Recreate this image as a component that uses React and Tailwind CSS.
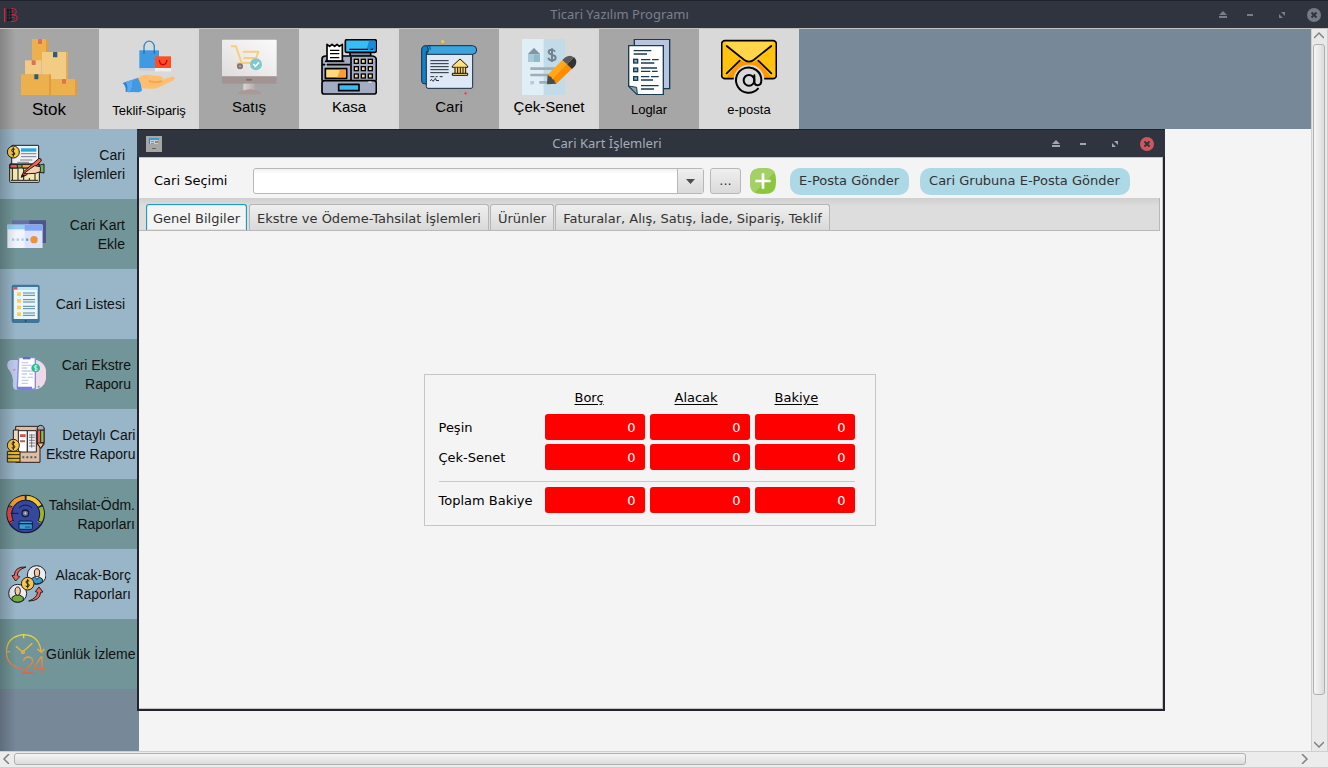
import React from "react";

function StockIcon() {
  return (
    <svg viewBox="63 117 168 168" className="size-14" aria-hidden="true">
      <rect x="96" y="117" width="42" height="66" fill="#ecb04d" />
      <rect x="138" y="117" width="7" height="42" fill="#e49a3e" />
      <rect x="114" y="117" width="12" height="15" rx="2" fill="#e07058" />
      <rect x="126" y="156" width="73" height="81" fill="#f2cb85" />
      <rect x="199" y="156" width="5" height="81" fill="#e5a850" />
      <rect x="159" y="156" width="13" height="16" rx="2" fill="#2f5a70" />
      <rect x="75" y="181" width="50" height="42" fill="#f2cb85" />
      <rect x="95" y="181" width="12" height="14" rx="2" fill="#e07058" />
      <rect x="63" y="223" width="84" height="62" fill="#ecb04d" />
      <rect x="147" y="223" width="6" height="62" fill="#e49a3e" />
      <rect x="103" y="223" width="12" height="15" rx="2" fill="#2f5a70" />
      <rect x="153" y="237" width="72" height="48" fill="#ecb04d" />
      <rect x="225" y="237" width="6" height="48" fill="#e49a3e" />
      <rect x="186" y="237" width="12" height="14" rx="2" fill="#e07058" />
    </svg>
  );
}

function OfferIcon() {
  return (
    <svg viewBox="363 117 168 168" className="size-14" aria-hidden="true">
      <path d="M432 160v-19a15 17 0 0 1 31 0v19" fill="none" stroke="#2f86d3" strokeWidth="4" />
      <rect x="418" y="151" width="59" height="54" fill="#3f9ae3" />
      <path d="M432 151v10M463 151v10" stroke="#1e70bd" strokeWidth="4" />
      <path d="M418 205h48v8h-48z" fill="#cdd0d4" />
      <rect x="465" y="169" width="48" height="36" fill="#fb4f24" />
      <rect x="465" y="204" width="48" height="10" fill="#f0f0f0" />
      <path d="M478 180q1 14 11 14t12-14" fill="none" stroke="#c9001f" strokeWidth="4" />
      <path d="M413 235q11-12 29-11l22 3q24-1 25 8 0 4-6 6 22-9 32-11 10-2 10 4 0 6-16 13l-32 15q-9 5-22 4l-30-1z" fill="#ffbe6f" />
      <path d="M447 243q20 7 39 0" fill="none" stroke="#f5a040" strokeWidth="4" />
      <path d="M397 239l17-6q11 19 12 39l-9 5-28-1q8-18 8-37z" fill="#3f9ae3" />
      <path d="M368 249l29-10q2 22-8 38l-12-2q2-16-9-26z" fill="#2f80cf" />
      <path d="M377 246l20-7q2 22-8 38l-8-1q4-19-4-30z" fill="#57aaf0" />
    </svg>
  );
}

function SaleIcon() {
  return (
    <svg viewBox="663 117 168 168" className="size-14" aria-hidden="true">
      <defs>
        <linearGradient id="screen" x1="0" y1="1" x2="1" y2="0">
          <stop offset="0" stopColor="#e0dcdd" />
          <stop offset="1" stopColor="#fbfafa" />
        </linearGradient>
        <linearGradient id="stand" x1="0" y1="0" x2="1" y2="0">
          <stop offset="0" stopColor="#d9d5d6" />
          <stop offset="1" stopColor="#b8abad" />
        </linearGradient>
      </defs>
      <path d="M669 119h158a3 3 0 0 1 3 3v108H666V122a3 3 0 0 1 3-3z" fill="url(#screen)" />
      <path d="M666 229h164v18a4 4 0 0 1-4 4H670a4 4 0 0 1-4-4z" fill="#a39494" />
      <rect x="738" y="236" width="18" height="6" rx="3" fill="#806f70" />
      <rect x="730" y="251" width="34" height="21" fill="url(#stand)" />
      <path d="M712 283q3-10 24-13 15-5 28 0 18 3 21 13z" fill="#ad9797" />
      <path d="M695 139h13l17 50h44M731 155h44l-6 19h-36M716 189q-4 0-4 5" fill="none" stroke="#f5cf7b" strokeWidth="6" strokeLinecap="round" strokeLinejoin="round" />
      <circle cx="720" cy="199" r="9" fill="#7d7072" />
      <circle cx="720" cy="199" r="4" fill="#a99fa0" />
      <circle cx="768" cy="193" r="18" fill="#7fc9ce" />
      <path d="M760 192l6 7 11-12" fill="none" stroke="#fff" strokeWidth="5" />
    </svg>
  );
}

const registerKeys = [1069, 1090, 1111].flatMap((x) => [184, 206, 228].map((y) => [x, y]));

function CashIcon() {
  return (
    <svg viewBox="963 117 168 168" className="size-14" aria-hidden="true">
      <g stroke="#000" strokeWidth="5" strokeLinejoin="round">
        <path d="M1050 155h62v15h-62z" fill="#798298" />
        <rect x="1036" y="119" width="93" height="38" rx="5" fill="#36bdf8" />
        <path d="M966 242v-64q0-10 11-10h139q12 0 13 12v62" fill="#a3acc2" />
        <rect x="966" y="242" width="163" height="40" rx="7" fill="#a3acc2" />
        <path d="M981 183v-50l8 6 7-6 8 6 7-6 7 6 9-6v50z" fill="#fff" />
        <path d="M1053 170v72M966 194h84" fill="none" />
        <rect x="976" y="206" width="64" height="29" fill="#ffd97d" />
        <rect x="1016" y="253" width="61" height="19" fill="#36bdf8" />
        <path d="M975 184h58" fill="none" />
      </g>
      <path d="M1107 122h17q3 0 3 4v25h-28z" fill="#168bdb" />
      <path d="M1048 148h56M1112 148h7M990 151h28M990 161h28M990 173h28" stroke="#000" strokeWidth="4" />
      <path d="M1020 209h17v23h-25z" fill="#ff9b31" />
      {registerKeys.map(([x, y]) => (
        <rect key={x + "-" + y} x={x - 6} y={y - 6} width="12" height="12" fill="#f3d9a0" stroke="#000" strokeWidth="4" />
      ))}
      <path d="M1105 246h10M978 188v12" stroke="#fff" strokeWidth="3" />
    </svg>
  );
}

function AccountIcon() {
  return (
    <svg viewBox="63 117 168 168" className="size-14" aria-hidden="true">
      <path d="M65 150q0-13 12-13h16v115H77q-12 0-12-8z" fill="#1580c4" stroke="#142c44" strokeWidth="3" />
      <path d="M79 155h139v105q0 5-5 5H84q-5 0-5-5z" fill="#dfe8f6" stroke="#142c44" strokeWidth="3" />
      <path d="M79 137h139q12 1 12 13t-12 13H79q12-13 0-26z" fill="#3ba4dc" stroke="#142c44" strokeWidth="3" />
      <path d="M91 149q0-12-12-12" fill="none" stroke="#0c5e9c" strokeWidth="4" />
      <path d="M91 182h55M91 191h55M91 200h55M91 209h55M91 218h55" stroke="#222b38" strokeWidth="3" />
      <path d="M91 230h12M107 230h6M119 230h9M91 243q4-9 6-2t6-2 5 2l9 1" fill="none" stroke="#222b38" strokeWidth="3" />
      <path d="M157 198l23-21 23 21v4h-46z" fill="#ffe178" stroke="#111" strokeWidth="3" />
      <path d="M163 203h34v17h-34z" fill="#ffd36f" />
      <path d="M165 202v19M173 202v19M181 202v19M189 202v19M197 202v19" stroke="#111" strokeWidth="3" />
      <path d="M157 220h46v6h-46z" fill="#ffe178" stroke="#111" strokeWidth="3" />
      <circle cx="128" cy="125" r="5" fill="#f5c544" />
      <circle cx="146" cy="119" r="2" fill="#80bd54" />
      <circle cx="181" cy="274" r="2" fill="#46aee1" />
      <path d="M192 280h10M197 275v10" stroke="#e74762" strokeWidth="3" />
    </svg>
  );
}

function ChequeIcon() {
  return (
    <svg viewBox="363 117 168 168" className="size-14" aria-hidden="true">
      <rect x="366" y="117" width="66" height="168" fill="#e0eff5" />
      <rect x="431" y="117" width="64" height="168" fill="#c1dce8" />
      <path d="M384 162l18-18 18 18v24h-36z" fill="#a9c9d8" />
      <path d="M384 162l18-18 18 18z" fill="#8793a0" />
      <path d="M402 164h18v22h-18z" fill="#8ebacb" />
      <path d="M465 155q-3-6-10-6-9 0-9 7 0 5 10 8 11 3 11 9 0 8-11 8-9 0-11-8M456 145v41" fill="none" stroke="#73828f" strokeWidth="6" />
      <path d="M391 206h74M391 225h52M418 247h30" stroke="#9faebd" strokeWidth="8" />
      <rect x="391" y="243" width="11" height="10" fill="#b5cbd8" />
      <path d="M443 224l45-45 14 14-46 46z" fill="#ffa719" />
      <path d="M455 239l46-47 15 14-48 46z" fill="#fd8c00" />
      <path d="M443 223q3 8 11 8 1 8 9 9 0 8 6 11l-28 2z" fill="#4d4b49" />
      <path d="M487 180l9-8q14-10 25 0l-20 21z" fill="#59595b" />
      <path d="M501 193l21-22q12 13 3 27l-9 9z" fill="#333336" />
    </svg>
  );
}

function LogsIcon() {
  return (
    <svg viewBox="663 117 168 168" className="size-14" aria-hidden="true">
      <path d="M703 118h106v148h-20V137h-86z" fill="#b8c5de" stroke="#183c52" strokeWidth="4" />
      <path d="M686 137h104v147h-78l-26-25z" fill="#fff" stroke="#183c52" strokeWidth="4" />
      <path d="M686 258l26 26-2-22z" fill="#8ba2b3" stroke="#183c52" strokeWidth="3" />
      <path d="M701 152h53M701 162h40M723 179h28M756 179h20M723 189h40M723 204h48M723 214h28M756 214h17M723 230h25M753 230h23M723 240h36M723 257h53M723 267h39" stroke="#183c52" strokeWidth="4" />
      <g fill="#8fa9bc" stroke="#183c52" strokeWidth="4">
        <rect x="701" y="178" width="12" height="11" />
        <rect x="701" y="204" width="12" height="11" />
        <rect x="701" y="230" width="12" height="11" />
      </g>
    </svg>
  );
}

function MailIcon() {
  return (
    <svg viewBox="963 117 168 168" className="size-14" aria-hidden="true">
      <rect x="965" y="122" width="164" height="114" rx="10" fill="#ffc20e" />
      <path d="M971 124h152l-62 54q-14 12-28 0z" fill="#ffd54a" />
      <path d="M979 233l41-52q27 15 54 0l41 52z" fill="#ff9800" />
      <rect x="965" y="122" width="164" height="114" rx="10" fill="none" stroke="#000" strokeWidth="5" />
      <path d="M980 138l53 42q14 10 28 0l53-42M980 220l39-38M1114 220l-39-38" fill="none" stroke="#000" strokeWidth="5" strokeLinecap="round" />
      <circle cx="1047" cy="240" r="46" fill="#d9d9d9" />
      <path d="M1074 266a38 38 0 1 1 10-25q0 15-11 15-10 0-10-13v-17" fill="none" stroke="#000" strokeWidth="6" strokeLinecap="round" />
      <circle cx="1047" cy="241" r="16" fill="none" stroke="#000" strokeWidth="6" />
    </svg>
  );
}

function LedgerIcon() {
  return (
    <svg viewBox="18 48 120 120" className="size-10 shrink-0" aria-hidden="true">
      <g stroke="#1c1c1e" strokeWidth="3" strokeLinejoin="round">
        <rect x="35" y="52" width="81" height="70" rx="2" fill="#edf0f5" />
        <rect x="29" y="108" width="89" height="55" rx="3" fill="#f4e9b3" />
        <path d="M37 120v36M54 120v36M71 120v36M88 150v6M105 135v21M33 157h81" fill="none" />
        <path d="M30 109h88v11H30z" fill="#67a558" />
        <path d="M30 109h22v11H30z" fill="#ed5b51" />
        <path d="M66 109h34v11H66z" fill="#f6a63d" />
        <circle cx="40" cy="72" r="18" fill="#f8c944" />
        <path d="M117 112l15-4v27l-13-2z" fill="#69b957" />
        <path d="M64 148l7-17 46-40q8 0 7 8l-45 42z" fill="#ee6652" />
        <path d="M71 137l20-15 13-9 17 3v15l-15 5-20 1z" fill="#f5d0b0" />
      </g>
      <path d="M63 148l3-11 9 7z" fill="#151515" />
      <path d="M63 66h46" stroke="#29a7d6" strokeWidth="10" />
      <path d="M63 77h46M63 86h46M60 96h37M52 103h35" stroke="#454850" strokeWidth="2" />
      <path d="M44 64q-9-4-9 3 0 4 5 5 6 2 4 7-3 4-9 0M40 58v28" fill="none" stroke="#1c1c1e" strokeWidth="3" />
    </svg>
  );
}

function CardsIcon() {
  return (
    <svg viewBox="18 258 120 120" className="size-10 shrink-0" aria-hidden="true">
      <rect x="36" y="277" width="104" height="68" fill="#6870a3" />
      <rect x="88" y="277" width="52" height="68" fill="#4b568b" />
      <rect x="22" y="290" width="105" height="70" fill="#f1f3ff" />
      <rect x="74" y="290" width="53" height="70" fill="#dce3fb" />
      <rect x="22" y="290" width="53" height="14" fill="#92cdf4" />
      <rect x="74" y="290" width="53" height="18" fill="#7fa5fa" />
      <path d="M36 335h39" stroke="#9bceef" strokeWidth="7" strokeDasharray="7 7" />
      <path d="M78 335h7" stroke="#6892ec" strokeWidth="7" />
      <circle cx="102" cy="335" r="11" fill="#eb923a" />
    </svg>
  );
}

function ListIcon() {
  return (
    <svg viewBox="18 468 120 120" className="size-10 shrink-0" aria-hidden="true">
      <rect x="35" y="470" width="84" height="115" rx="6" fill="#40769a" />
      <rect x="41" y="477" width="72" height="96" fill="#e9f7fc" />
      <path d="M41 477h12v8H41z" fill="#ed4e59" />
      <path d="M53 477h60v9H53z" fill="#bce5f5" />
      {[498, 518, 538, 558].map((y) => (
        <g key={y}>
          <rect x="51" y={y - 5} width="12" height="11" fill="#ffce57" />
          <path d={`M69 ${y - 3}h36M69 ${y + 4}h36`} stroke="#59849c" strokeWidth="3" />
        </g>
      ))}
      <circle cx="77" cy="579" r="3" fill="#234e6a" />
    </svg>
  );
}

function StatementIcon() {
  return (
    <svg viewBox="18 48 120 120" className="size-10 shrink-0" aria-hidden="true">
      <path d="M24 91q-7-28 19-25 25 2 37 10 14-16 32-9 25 8 27 37 2 30-15 44-19 13-35-2-14-8-31 5-20 12-19-22 1-19-15-38z" fill="#f0d7e9" />
      <path d="M24 91q-7-28 19-25l37 10v72q-20 4-34 7-10-4-7-26 1-19-15-38z" fill="#bccbef" />
      <path d="M56 59h50v91q-4 5-10 5H57q-6 0-5-9z" fill="#fff" stroke="#8787ee" strokeWidth="4" />
      <path d="M69 57h22v7H69z" fill="#6767dc" />
      <path d="M51 146h45q0 9 8 9H56q-6 0-5-9z" fill="#7a80dd" />
      <path d="M65 74h20M65 82h30M65 90h17M65 99h34M65 108h16M88 108h11M65 118h12M83 118h16M65 127h20M65 136h18" stroke="#c8cce9" strokeWidth="4" />
      <circle cx="107" cy="90" r="13" fill="#29bd96" />
      <path d="M112 84q-9-3-9 2t5 4 3 7q-5 2-8-1M107 81v18" fill="none" stroke="#fff" strokeWidth="2" />
      <circle cx="118" cy="65" r="3" fill="#31c793" />
      <circle cx="116" cy="146" r="3" fill="#31c793" />
      <circle cx="43" cy="95" r="3" fill="#ed7987" />
    </svg>
  );
}

function DetailIcon() {
  return (
    <svg viewBox="18 258 120 120" className="size-10 shrink-0" aria-hidden="true">
      <g stroke="#252020" strokeWidth="3" strokeLinejoin="round">
        <rect x="47" y="265" width="73" height="108" fill="#dfbca2" />
        <path d="M40 276h17v94H40z" fill="#f2d6bc" />
        <path d="M55 278h27v64H55z" fill="#fff" />
        <path d="M82 278h27v64H82z" fill="#edf0f4" />
        <path d="M112 270q10-14 20 0v49l-9 12-11-12z" fill="#ef6250" />
        <path d="M122 276h10v38h-10z" fill="#8ebc55" />
        <path d="M112 268q10-12 20 0v8h-20z" fill="#a8a9b5" />
        <path d="M112 315h20l-10 16z" fill="#f4c293" />
        <path d="M22 340h38v32H22z" fill="#e9b827" />
        <path d="M22 350h38M22 361h38" fill="none" />
        <circle cx="40" cy="322" r="18" fill="#f8c944" />
      </g>
      <path d="M60 289h17v8H60zM60 307h15v6H60z" fill="#cc5548" />
      <path d="M87 291h18M87 298h18M87 307h18M87 315h18M87 324h18M95 289v40" stroke="#4b4b50" strokeWidth="2" />
      <path d="M67 358h44" stroke="#416955" strokeWidth="6" strokeDasharray="6 6" />
      <path d="M45 314q-9-4-9 3 0 4 5 5 6 2 3 7-3 4-9 0M40 308v28" fill="none" stroke="#252020" strokeWidth="3" />
    </svg>
  );
}

function GaugeIcon() {
  return (
    <svg viewBox="18 468 120 120" className="size-10 shrink-0" aria-hidden="true">
      <circle cx="77" cy="528" r="56" fill="#36479f" stroke="#151a35" strokeWidth="4" />
      <g fill="none" strokeWidth="12">
        <path d="M36 553a48 48 0 0 1-5-44" stroke="#e9463f" />
        <path d="M32 507a50 50 0 0 1 42-28" stroke="#f49a24" />
        <path d="M80 479a49 49 0 0 1 39 24" stroke="#f4c729" />
        <path d="M122 508a48 48 0 0 1-5 46" stroke="#9db528" />
      </g>
      <g fill="none" stroke="#151a35" strokeWidth="3">
        <path d="M41 550a42 42 0 1 1 73-1M28 503l10 4M77 472v14M115 508l11-5M28 553l11-6M125 554l-11-6" />
        <path d="M56 526h-24M57 509q19-16 39 0" />
      </g>
      <circle cx="76" cy="526" r="10" fill="#6c7893" stroke="#151a35" strokeWidth="4" />
      <circle cx="76" cy="526" r="3" fill="#cacfdc" />
      <rect x="57" y="549" width="40" height="25" rx="3" fill="#369fd9" stroke="#151a35" strokeWidth="3" />
      <path d="M57 557h40" stroke="#151a35" strokeWidth="4" />
      <path d="M75 567h16" stroke="#151a35" strokeWidth="2" />
    </svg>
  );
}

function BalanceIcon() {
  return (
    <svg viewBox="18 54 120 120" className="size-10 shrink-0" aria-hidden="true">
      <g stroke="#202020" strokeWidth="3" strokeLinejoin="round">
        <circle cx="110" cy="87" r="28" fill="#ececf1" />
        <path d="M93 108V99l11-7h12l11 7v9q-17 11-34 0z" fill="#369bd1" />
        <path d="M103 81q0-13 8-13t8 13q0 12-8 12t-8-12z" fill="#f6c8a2" />
        <path d="M105 94l6 6 6-6" fill="#fff" />
        <circle cx="53" cy="142" r="27" fill="#ececf1" />
        <path d="M36 163v-9l11-7h12l11 7v9q-17 11-34 0z" fill="#71ad3e" />
        <path d="M45 136q0-13 8-13t8 13q0 12-8 12t-8-12z" fill="#f6c8a2" />
        <circle cx="83" cy="113" r="19" fill="#f7c64a" />
        <path d="M78 63q-34-2-35 25l-7 1 11 16 12-13-7-3q-1-17 26-26z" fill="#ed655b" />
        <path d="M86 165q34 0 36-26l7-1-12-15-11 14 7 2q-3 18-27 26z" fill="#ed655b" />
      </g>
      <path d="M88 105q-10-4-10 3 0 4 5 5 7 2 4 7-3 4-10 0M83 99v28" fill="none" stroke="#202020" strokeWidth="3" />
    </svg>
  );
}

function DailyIcon() {
  return (
    <svg viewBox="18 264 120 120" className="size-10 shrink-0" aria-hidden="true">
      <defs>
        <linearGradient id="daily" gradientUnits="userSpaceOnUse" x1="0" y1="264" x2="0" y2="384">
          <stop offset="0" stopColor="#e6df39" />
          <stop offset="0.5" stopColor="#e7a93d" />
          <stop offset="1" stopColor="#f0573f" />
        </linearGradient>
      </defs>
      <g fill="none" stroke="url(#daily)" strokeWidth="4" strokeLinejoin="round">
        <path d="M68 370q-49-11-49-53 2-46 52-51 46 2 52 49M112 309l12 10 9-10M71 266v11M20 317h11M48 301l20 17 29-26" />
        <circle cx="69" cy="319" r="4" />
        <path d="M70 346q3-13 15-13 14 1 13 14-2 7-15 18l-14 14v2h30M126 381v-48h-3l-21 33v3h33" />
      </g>
    </svg>
  );
}

const tools = [
  { label: "Stok", Icon: StockIcon, tone: "bg-[#a6a6a6]", text: "h-[30px] text-[17px]" },
  { label: "Teklif-Sipariş", Icon: OfferIcon, tone: "bg-[#d9d9d9]", text: "h-[31px] text-[13px]" },
  { label: "Satış", Icon: SaleIcon, tone: "bg-[#a6a6a6]", text: "h-[25px] text-[15px]" },
  { label: "Kasa", Icon: CashIcon, tone: "bg-[#d9d9d9]", text: "h-[25px] text-[15px]" },
  { label: "Cari", Icon: AccountIcon, tone: "bg-[#a6a6a6]", text: "h-[25px] text-[15px]" },
  { label: "Çek-Senet", Icon: ChequeIcon, tone: "bg-[#d9d9d9]", text: "h-[25px] text-[15px]" },
  { label: "Loglar", Icon: LogsIcon, tone: "bg-[#a6a6a6]", text: "h-[30px] text-[13px]" },
  { label: "e-posta", Icon: MailIcon, tone: "bg-[#d9d9d9]", text: "h-[30px] text-[13px]" },
];

const menu = [
  { lines: ["Cari", "İşlemleri"], Icon: LedgerIcon, pad: "pr-3.5" },
  { lines: ["Cari Kart", "Ekle"], Icon: CardsIcon, pad: "pr-3.5" },
  { lines: ["Cari Listesi"], Icon: ListIcon, pad: "pr-3.5" },
  { lines: ["Cari Ekstre", "Raporu"], Icon: StatementIcon, pad: "pr-2" },
  { lines: ["Detaylı Cari", "Ekstre Raporu"], Icon: DetailIcon, pad: "pr-1" },
  { lines: ["Tahsilat-Ödm.", "Raporları"], Icon: GaugeIcon, pad: "pr-1" },
  { lines: ["Alacak-Borç", "Raporları"], Icon: BalanceIcon, pad: "pr-2" },
  { lines: ["Günlük İzleme"], Icon: DailyIcon, pad: "pr-1" },
];

function WindowButtons({ tone, closeTone }) {
  return (
    <div className={"flex h-full items-center " + tone}>
      <button type="button" aria-label="Gölgele" className="flex w-[26px] justify-center">
        <svg viewBox="0 0 8 7" className="h-[7px] w-2" fill="currentColor"><path d="M4 0l4 4H0zM0 5h8v2H0z" /></svg>
      </button>
      <button type="button" aria-label="Küçült" className="flex w-7 justify-center">
        <svg viewBox="0 0 6 2" className="h-0.5 w-1.5" fill="currentColor"><path d="M0 0h6v2H0z" /></svg>
      </button>
      <button type="button" aria-label="Büyüt" className="flex w-9 justify-center">
        <svg viewBox="0 0 6 6" className="size-1.5" fill="currentColor"><path d="M2 0h4v4zM0 2v4h4z" /></svg>
      </button>
      <button type="button" aria-label="Kapat" className={"flex w-7 justify-center " + closeTone}>
        <svg viewBox="0 0 14 14" className="size-3.5">
          <circle cx="7" cy="7" r="7" fill="currentColor" />
          <path d="M4.500 4.500l5 5M9.500 4.500l-5 5" stroke="#2f343f" strokeWidth="2" />
        </svg>
      </button>
    </div>
  );
}

function Chevron({ d, label }) {
  return (
    <button type="button" aria-label={label} className="flex size-3.5 shrink-0 items-center justify-center text-[#808080]">
      <svg viewBox="0 0 10 10" className="size-2.5" fill="none" stroke="currentColor" strokeWidth="1.500"><path d={d} /></svg>
    </button>
  );
}

function Tab({ children, selected }) {
  return (
    <button
      type="button"
      role="tab"
      aria-selected={selected ? "true" : "false"}
      className={
        selected
          ? "mr-px h-[26px] rounded-t-[3px] border border-b-0 border-[#1f9bbf] bg-[#f4f4f4] px-1.5 pt-0.5 inset-shadow-[0_0_0_1px_#d3e9f1]"
          : "h-[26px] rounded-t-[3px] border border-b-0 border-[#b5b5b5] bg-linear-to-b from-[#efefef] to-[#d9d9d9] px-[7px] pt-0.5"
      }
    >
      {children}
    </button>
  );
}

function Amount() {
  return (
    <td className="p-0 pr-[5px]">
      <output className="block h-[26px] w-[100px] rounded-[3px] bg-[#ff0000] pr-[9px] text-right leading-[28px] text-white">0</output>
    </td>
  );
}

function AmountRow({ label, className }) {
  return (
    <tr className={className}>
      <th scope="row" className="w-[106px] p-0 pt-0.5 text-left font-normal whitespace-nowrap">{label}</th>
      <Amount />
      <Amount />
      <Amount />
    </tr>
  );
}

function AccountWindow() {
  return (
    <section
      role="dialog"
      aria-labelledby="account-title"
      className="absolute top-[129px] right-[163px] bottom-[57px] left-[137px] flex flex-col rounded-t-xs bg-[#23252e] font-['DejaVu_Sans',sans-serif] text-[13px] text-black"
    >
      <header className="flex h-7 shrink-0 items-center border-t border-[#1e222a] bg-[#2f343f] pr-1">
        <div className="flex w-[34px] pl-[9px]">
          <svg viewBox="0 0 16 16" className="size-4">
            <path d="M0 0h16v16H0z" fill="#a6a6a6" />
            <path d="M4 3h8v5H4z" fill="#c3d0dc" />
            <path d="M3 2h10v2H3z" fill="#3f9bc9" />
            <path d="M3 3h1v5H3z" fill="#4683ac" />
            <path d="M5 5h3v1H5zM5 7h3v1H5z" fill="#8793a0" />
            <path d="M9 5h3v2H9z" fill="#8f8768" />
            <path d="M6 12h4v1H6z" fill="#666" />
          </svg>
        </div>
        <h2 id="account-title" className="flex-1 text-center font-['Noto_Sans',sans-serif] text-[#a6adb9]">Cari Kart İşlemleri</h2>
        <WindowButtons tone="text-[#a0a6b2]" closeTone="text-[#cc575d]" />
      </header>

      <div className="mx-0.5 mb-0.5 flex min-h-0 flex-1 flex-col border-t border-r border-b border-[#c4c4c4] bg-[#f4f4f4]">
        <div className="flex h-10 shrink-0 items-center pt-1.5 pl-[15px]">
          <label htmlFor="account" className="w-[99px]">Cari Seçimi</label>
          <div className="flex h-[26px] w-[451px] rounded-[3px] border border-[#b8b8b8]">
            <input id="account" className="min-w-0 flex-1 rounded-l-[3px] bg-linear-to-b from-[#f0f0f0] to-white to-20% px-2 outline-none" />
            <button type="button" aria-label="Listeyi aç" className="flex w-[26px] items-center justify-center border-l border-[#b8b8b8] bg-linear-to-b from-[#efefef] to-[#dadada]">
              <svg viewBox="0 0 9 5" className="h-[5px] w-[9px]" fill="#4d4d4d"><path d="M0 0h9L4.500 5z" /></svg>
            </button>
          </div>
          <button type="button" className="ml-1.5 h-[26px] w-[31px] rounded-[3px] border border-[#b8b8b8] bg-linear-to-b from-[#efefef] to-[#dadada] text-[#333]">...</button>
          <button type="button" aria-label="Ekle" className="ml-[9px]">
            <svg viewBox="0 0 78 78" className="size-[26px]">
              <path d="M39 0c30 0 39 9 39 39s-9 39-39 39S0 69 0 39 9 0 39 0z" fill="#8cc63f" />
              <path d="M39 0c20 0 30 4 35 13L13 74C3 69 0 59 0 39 0 9 9 0 39 0z" fill="#a3d165" />
              <path d="M39 16v46M16 39h46" stroke="#fff" strokeWidth="8" />
            </svg>
          </button>
          <button type="button" className="ml-3.5 h-[27px] rounded-[10px] bg-[#add8e6] pr-2.5 pl-[9px] whitespace-nowrap text-[#333]">E-Posta Gönder</button>
          <button type="button" className="ml-[11px] h-[27px] rounded-[10px] bg-[#add8e6] pr-2.5 pl-[9px] whitespace-nowrap text-[#333]">Cari Grubuna E-Posta Gönder</button>
        </div>

        <div
          role="tablist"
          className="mr-0.5 flex h-[33px] shrink-0 items-end gap-px border-r border-b border-[#b8b8b8] bg-linear-to-b from-[#cfcfcf] to-[#dddddd] to-25% pl-[7px] whitespace-nowrap text-[#333]"
        >
          <Tab selected>Genel Bilgiler</Tab>
          <Tab>Ekstre ve Ödeme-Tahsilat İşlemleri</Tab>
          <Tab>Ürünler</Tab>
          <Tab>Faturalar, Alış, Satış, İade, Sipariş, Teklif</Tab>
        </div>

        <div role="tabpanel" className="flex flex-1 items-center justify-center pr-0.5 pb-10">
          <div className="border border-[#c6c6c6] pt-[13px] pr-[15px] pb-3 pl-3.5">
            <table className="border-collapse">
              <thead>
                <tr className="h-6 text-left align-top underline underline-offset-2">
                  <td className="p-0" />
                  <th scope="col" className="p-0 pl-[30px] font-normal">Borç</th>
                  <th scope="col" className="p-0 pl-[25px] font-normal">Alacak</th>
                  <th scope="col" className="p-0 pl-5 font-normal">Bakiye</th>
                </tr>
              </thead>
              <tbody>
                <AmountRow label="Peşin" className="h-[30px]" />
                <AmountRow label="Çek-Senet" className="h-[30px]" />
                <tr className="h-[15px]">
                  <td colSpan={4} className="p-0 pr-[5px] pb-[5px] align-bottom"><hr className="border-[#c8c8c8]" /></td>
                </tr>
                <AmountRow label="Toplam Bakiye" className="h-[26px]" />
              </tbody>
            </table>
          </div>
        </div>
      </div>
    </section>
  );
}

export default function App() {
  return (
    <div className="relative flex h-screen flex-col overflow-hidden bg-[#f4f4f4] font-['Liberation_Sans',Arial,sans-serif]">
      <header className="flex h-[29px] shrink-0 items-center border-t border-b border-t-[#1e222a] border-b-[#c3c4c0] bg-[#2f343f]">
        <div className="flex w-[29px] pl-[3px]">
          <svg viewBox="0 0 48 48" className="size-4" fill="none">
            <path d="M12 6h14v36H12z" fill="#12151c" />
            <path d="M12 15h14M12 24h14M12 33h14M19 6v36" stroke="#3a414e" strokeWidth="2" />
            <path d="M5 3v42" stroke="#d8233f" strokeWidth="4" />
            <path d="M25 5h6q9 0 9 9t-9 9h-5M26 24h7q10 0 10 9t-10 10h-9M25 12h4q5 2 0 5M26 31h6q6 3 0 6" stroke="#d8233f" strokeWidth="3" />
          </svg>
        </div>
        <h1 className="flex-1 text-center font-['Noto_Sans',sans-serif] text-[13px] text-[#7a808d]">Ticari Yazılım Programı</h1>
        <WindowButtons tone="text-[#777d89]" closeTone="text-[#747a86]" />
      </header>

      <div className="flex min-h-0 flex-1">
        <div className="relative flex min-w-0 flex-1 flex-col">
          <nav aria-label="Modüller" className="flex h-[100px] shrink-0 bg-[#778899]">
            {tools.map(({ label, Icon, tone, text }) => (
              <button key={label} type="button" className={"flex w-[100px] shrink-0 flex-col items-center pt-2.5 first:-ml-px " + tone}>
                <Icon />
                <span className={"flex items-center whitespace-nowrap text-black " + text}>{label}</span>
              </button>
            ))}
          </nav>
          <nav aria-label="Cari menüsü" className="flex w-[139px] flex-1 flex-col bg-[#778899]">
            {menu.map(({ lines, Icon, pad }) => (
              <button
                key={lines.join(" ")}
                type="button"
                className={"flex h-[70px] shrink-0 items-center justify-between pl-1.5 text-right text-[14px] leading-[19px] text-[#111] odd:bg-[#98b6c8] even:bg-[#719598] " + pad}
              >
                <Icon />
                <span className="pt-px whitespace-nowrap">
                  {lines.map((line) => (
                    <span key={line} className="block">{line}</span>
                  ))}
                </span>
              </button>
            ))}
          </nav>
          <div className="pointer-events-none absolute inset-y-0 left-0 w-4 bg-linear-to-r from-black/20 to-transparent" />
        </div>

        <div className="flex w-[17px] shrink-0 flex-col border-r border-l border-[#cfcfcf] bg-[#e9e9e9]">
          <Chevron label="Yukarı kaydır" d="M0 7l5-5 5 5" />
          <div className="mt-px mr-0.5 ml-px flex-[651] rounded-[3px] border border-[#b0b0b0] bg-linear-to-r from-[#f6f6f6] to-[#dcdcdc]" />
          <div className="flex-[42]" />
          <Chevron label="Aşağı kaydır" d="M0 3l5 5 5-5" />
        </div>
      </div>

      <div className="flex h-[17px] shrink-0 border-t border-b border-[#cfcfcf] bg-[#ececec] pr-[17px]">
        <Chevron label="Sola kaydır" d="M7 0L2 5l5 5" />
        <div className="mt-px mb-0.5 flex-[1232] rounded-[3px] border border-[#b0b0b0] bg-linear-to-b from-[#f6f6f6] to-[#dcdcdc]" />
        <div className="flex-[51]" />
        <Chevron label="Sağa kaydır" d="M3 0l5 5-5 5" />
      </div>

      <AccountWindow />
    </div>
  );
}
